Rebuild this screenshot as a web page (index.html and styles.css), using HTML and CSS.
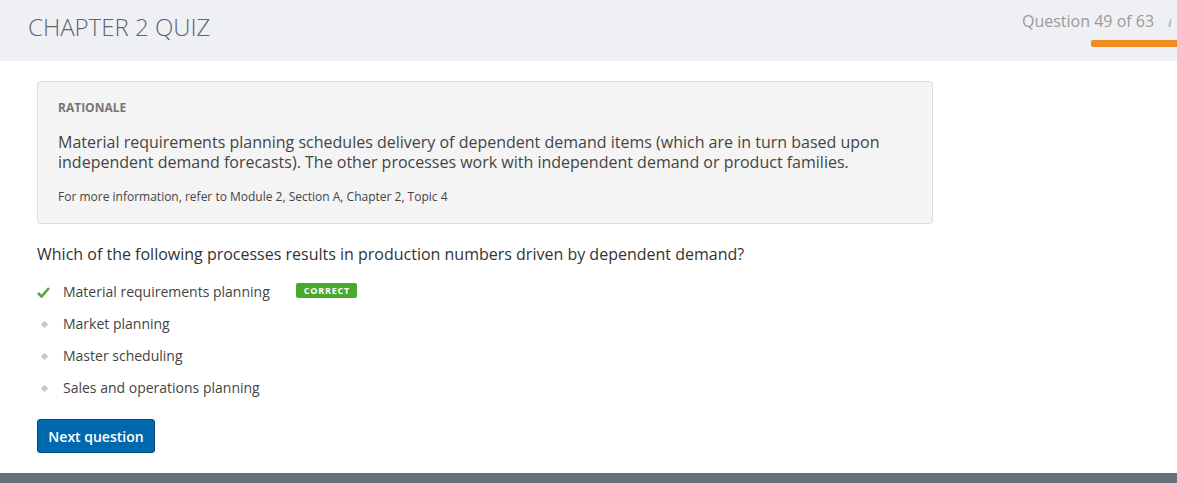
FILE: index.html
```html
<!DOCTYPE html>
<html>
<head>
<meta charset="utf-8">
<link rel="stylesheet" href="styles.css">
</head>
<body>
<header class="topbar">
  <h1 class="title">CHAPTER 2 QUIZ</h1>
  <div class="progress">
    <div class="progress-text">Question 49 of 63 <span class="more">i</span></div>
    <div class="progress-bar"></div>
  </div>
</header>
<main class="content">
  <section class="rationale">
    <div class="rationale-label">RATIONALE</div>
    <p class="rationale-text">Material requirements planning schedules delivery of dependent demand items (which are in turn based upon independent demand forecasts). The other processes work with independent demand or product families.</p>
    <p class="rationale-ref">For more information, refer to Module 2, Section A, Chapter 2, Topic 4</p>
  </section>
  <p class="question">Which of the following processes results in production numbers driven by dependent demand?</p>
  <ul class="options">
    <li class="option">
      <span class="opt-icon"><svg width="13" height="11" viewBox="0 0 13 11"><path d="M1 6 L4.5 9.5 L12 1" fill="none" stroke="#5aa23a" stroke-width="2.6"/></svg></span>
      <span class="opt-text">Material requirements planning</span>
      <span class="badge">CORRECT</span>
    </li>
    <li class="option">
      <span class="opt-icon dot"><svg width="7" height="7" viewBox="0 0 7 7"><path d="M3.5 0 L7 3.5 L3.5 7 L0 3.5 Z" fill="#c4c4c4"/><rect x="3" y="3" width="1" height="1" fill="#e6e6e6"/></svg></span>
      <span class="opt-text">Market planning</span>
    </li>
    <li class="option">
      <span class="opt-icon dot"><svg width="7" height="7" viewBox="0 0 7 7"><path d="M3.5 0 L7 3.5 L3.5 7 L0 3.5 Z" fill="#c4c4c4"/><rect x="3" y="3" width="1" height="1" fill="#e6e6e6"/></svg></span>
      <span class="opt-text">Master scheduling</span>
    </li>
    <li class="option">
      <span class="opt-icon dot"><svg width="7" height="7" viewBox="0 0 7 7"><path d="M3.5 0 L7 3.5 L3.5 7 L0 3.5 Z" fill="#c4c4c4"/><rect x="3" y="3" width="1" height="1" fill="#e6e6e6"/></svg></span>
      <span class="opt-text">Sales and operations planning</span>
    </li>
  </ul>
  <button class="next-btn">Next question</button>
</main>
<footer class="footer"></footer>
</body>
</html>
```
FILE: styles.css
```css
* { box-sizing: border-box; }
html, body { margin: 0; padding: 0; }
body {
  font-family: "Open Sans", "Liberation Sans", sans-serif;
  color: #333;
  background: #fff;
  width: 1177px;
  height: 483px;
  overflow: hidden;
  display: flex;
  flex-direction: column;
}
.topbar {
  height: 61px;
  background: #eff0f4;
  display: flex;
  justify-content: space-between;
  align-items: flex-start;
  flex-shrink: 0;
}
.title {
  margin: 0;
  padding: 11px 0 0 28px;
  font-weight: 300;
  font-size: 24px;
  line-height: 32px;
  color: #5b6672;
}
.progress {
  width: 155px;
  display: flex;
  flex-direction: column;
  align-items: flex-end;
  padding-top: 10px;
}
.progress-text {
  align-self: flex-start;
  font-size: 16px;
  line-height: 22px;
  color: #9a9a9a;
  white-space: nowrap;
}
.progress-text .more {
  font-style: italic;
  font-size: 10px;
  font-weight: 700;
  color: #a9adb8;
  margin-left: 10px;
}
.progress-bar {
  width: 86px;
  height: 7px;
  margin-top: 6px;
  background: #f08b1f;
  border-radius: 2px 0 0 2px;
}
.content {
  flex: 1;
  padding: 20px 0 0 37px;
}
.rationale {
  width: 896px;
  height: 143px;
  background: #f4f4f4;
  border: 1px solid #dedede;
  border-radius: 3px;
  padding: 17px 20px 0 20px;
}
.rationale-label {
  font-size: 12px;
  font-weight: 700;
  color: #777;
  line-height: 18px;
}
.rationale-text {
  margin: 15px 0 0;
  font-size: 16px;
  line-height: 20px;
  color: #444;
}
.rationale-ref {
  margin: 16px 0 0;
  font-size: 12px;
  line-height: 18px;
  color: #444;
}
.question {
  margin: 18px 0 0;
  font-size: 16px;
  line-height: 24px;
  color: #333;
}
.options {
  list-style: none;
  margin: 10px 0 0;
  padding: 0;
}
.option {
  display: flex;
  align-items: center;
  height: 32px;
  font-size: 14px;
  color: #444;
}
.opt-icon {
  width: 26px;
  display: flex;
  align-items: center;
}
.opt-icon.dot { padding-left: 4px; }
.opt-text { line-height: 20px; }
.badge {
  margin-left: 26px;
  background: #49a82e;
  color: #fff;
  font-size: 9px;
  font-weight: 700;
  letter-spacing: 0.8px;
  line-height: 15px;
  padding: 0 7px 0 8px;
  border-radius: 2px;
  margin-top: -3px;
}
.next-btn {
  margin-top: 15px;
  width: 118px;
  height: 34px;
  background: #0069ae;
  border: 1px solid #0a4f80;
  border-radius: 3px;
  color: #fff;
  font-family: "Open Sans", "Liberation Sans", sans-serif;
  font-size: 14px;
  font-weight: 600;
  padding: 0;
  cursor: pointer;
}
.footer {
  height: 10px;
  background: #67717b;
  flex-shrink: 0;
}
```
